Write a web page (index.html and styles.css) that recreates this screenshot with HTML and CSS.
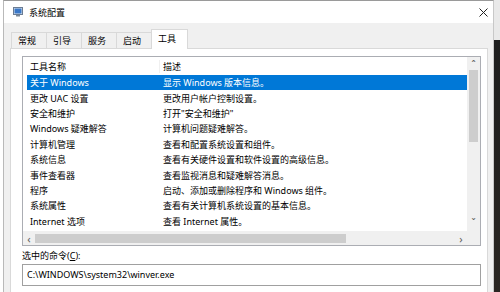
FILE: index.html
```html
<!DOCTYPE html>
<html lang="zh-CN">
<head>
    <meta charset="UTF-8">
    <title>系统配置</title>
    <link rel="stylesheet" href="styles.css">
</head>
<body>
    <div class="window">
        <div class="titlebar">
            <svg class="app-icon" width="10" height="10" viewBox="0 0 10 10">
                <rect x="0.5" y="0.5" width="9" height="7" fill="#dfe6ee" stroke="#6b7c93"/>
                <rect x="1.5" y="1.5" width="7" height="5" fill="#3a78c8"/>
                <rect x="3" y="8" width="4" height="1.5" fill="#7a8794"/>
            </svg>
            <span class="title">系统配置</span>
            <svg class="close" width="9" height="9" viewBox="0 0 9 9">
                <path d="M0.5 0.5 L8.5 8.5 M8.5 0.5 L0.5 8.5" stroke="#222" stroke-width="1"/>
            </svg>
        </div>

        <div class="client">
            <div class="tabs">
                <div class="tab">常规</div>
                <div class="tab">引导</div>
                <div class="tab">服务</div>
                <div class="tab">启动</div>
                <div class="tab active">工具</div>
            </div>

            <div class="panel">
                <div class="listview">
                    <div class="lv-main">
                        <div class="lv-list">
                            <div class="lv-header">
                                <div class="col-name">工具名称</div>
                                <div class="col-desc">描述</div>
                            </div>
                            <div class="lv-row selected">
                                <div class="col-name">关于 Windows</div>
                                <div class="col-desc">显示 Windows 版本信息。</div>
                            </div>
                            <div class="lv-row">
                                <div class="col-name">更改 UAC 设置</div>
                                <div class="col-desc">更改用户帐户控制设置。</div>
                            </div>
                            <div class="lv-row">
                                <div class="col-name">安全和维护</div>
                                <div class="col-desc">打开"安全和维护"</div>
                            </div>
                            <div class="lv-row">
                                <div class="col-name">Windows 疑难解答</div>
                                <div class="col-desc">计算机问题疑难解答。</div>
                            </div>
                            <div class="lv-row">
                                <div class="col-name">计算机管理</div>
                                <div class="col-desc">查看和配置系统设置和组件。</div>
                            </div>
                            <div class="lv-row">
                                <div class="col-name">系统信息</div>
                                <div class="col-desc">查看有关硬件设置和软件设置的高级信息。</div>
                            </div>
                            <div class="lv-row">
                                <div class="col-name">事件查看器</div>
                                <div class="col-desc">查看监视消息和疑难解答消息。</div>
                            </div>
                            <div class="lv-row">
                                <div class="col-name">程序</div>
                                <div class="col-desc">启动、添加或删除程序和 Windows 组件。</div>
                            </div>
                            <div class="lv-row">
                                <div class="col-name">系统属性</div>
                                <div class="col-desc">查看有关计算机系统设置的基本信息。</div>
                            </div>
                            <div class="lv-row">
                                <div class="col-name">Internet 选项</div>
                                <div class="col-desc">查看 Internet 属性。</div>
                            </div>
                        </div>
                        <div class="vscroll">
                            <span class="arrow">&#710;</span>
                            <div class="vthumb"></div>
                            <span class="arrow down">&#711;</span>
                        </div>
                    </div>
                    <div class="hscroll">
                        <span class="arrow">&lsaquo;</span>
                        <div class="htrack"><div class="hthumb"></div></div>
                        <span class="arrow">&rsaquo;</span>
                        <div class="corner"></div>
                    </div>
                </div>

                <div class="cmd-label">选中的命令(<u>C</u>):</div>
                <div class="cmd">C:\WINDOWS\system32\winver.exe</div>
                <div class="buttons"><div class="btn"></div></div>
            </div>
        </div>
    </div>
    <div class="desktop"></div>
</body>
</html>
```

FILE: styles.css
```css
body {
    margin: 0;
    width: 500px;
    height: 292px;
    overflow: hidden;
    display: flex;
    font-family: "Noto Sans", "Noto Sans CJK SC", sans-serif;
    font-size: 9px;
    color: #000;
    background: #fff;
}

.window {
    width: 489px;
    height: 292px;
    margin-left: 3px;
    border-left: 1px solid #b9b9b9;
    border-right: 1px solid #c8c8c8;
    border-top: 1px solid #9a9a9a;
    display: flex;
    flex-direction: column;
    flex-shrink: 0;
    overflow: hidden;
}

.desktop {
    flex: 1;
    background: linear-gradient(#e9e9e9 0, #e9e9e9 40px, #1e1e1e 40px, #2a2622 100%);
}

.titlebar {
    height: 22px;
    flex-shrink: 0;
    background: #fff;
    display: flex;
    align-items: center;
    padding-left: 9px;
    padding-right: 5px;
}

.app-icon {
    margin-right: 6px;
}

.title {
    flex: 1;
}

.client {
    flex: 1 0 auto;
    background: #f0f0f0;
    padding: 6px 5px 0 6px;
    display: flex;
    flex-direction: column;
}

.tabs {
    display: flex;
    flex-shrink: 0;
    height: 19px;
    align-items: flex-end;
    padding-left: 1px;
}

.tab {
    width: 35px;
    height: 16px;
    box-sizing: border-box;
    padding-left: 6px;
    line-height: 15px;
    border: 1px solid #d9d9d9;
    border-bottom: none;
    border-right: none;
    background: #f0f0f0;
}

.tab.active {
    width: 37px;
    height: 20px;
    margin-bottom: -1px;
    background: #fff;
    border-right: 1px solid #d9d9d9;
    padding-top: 1px;
    position: relative;
}

.panel {
    flex: 1 0 auto;
    background: #fff;
    border: 1px solid #d9d9d9;
    border-bottom: none;
    padding: 7px 6px 0 11px;
}

.listview {
    height: 188px;
    border: 1px solid #abadb3;
    display: flex;
    flex-direction: column;
}

.lv-main {
    flex: 1;
    display: flex;
    min-height: 0;
}

.lv-list {
    flex: 1;
    padding-left: 4px;
    overflow: hidden;
}

.lv-header {
    height: 18px;
    display: flex;
    align-items: center;
}

.lv-header .col-name {
    border-right: 1px solid #f0f0f0;
}

.lv-row {
    height: 15.4px;
    display: flex;
    align-items: center;
    white-space: nowrap;
}

.lv-row.selected {
    background: #0078d7;
    color: #fff;
}

.col-name {
    width: 133px;
    padding-left: 3px;
    flex-shrink: 0;
    box-sizing: border-box;
}

.col-desc {
    padding-left: 3px;
}

.vscroll {
    width: 13px;
    background: #f0f0f0;
    display: flex;
    flex-direction: column;
    align-items: center;
}

.arrow {
    color: #606060;
    font-size: 10px;
    line-height: 13px;
    height: 13px;
}

.vscroll .arrow {
    line-height: 16px;
}

.vscroll .arrow.down {
    line-height: 10px;
}

.vthumb {
    width: 9px;
    height: 72px;
    background: #cdcdcd;
}

.vscroll .down {
    margin-top: auto;
}

.hscroll {
    height: 14px;
    flex-shrink: 0;
    background: #f0f0f0;
    display: flex;
    align-items: center;
}

.hscroll .arrow {
    width: 12px;
    text-align: center;
    font-size: 11px;
}

.htrack {
    flex: 1;
    height: 9px;
}

.hthumb {
    width: 311px;
    height: 9px;
    background: #cdcdcd;
}

.corner {
    width: 13px;
    height: 14px;
    background: #f0f0f0;
}

.cmd-label {
    margin-top: 3px;
    height: 14px;
    line-height: 14px;
}

.cmd {
    margin-top: 1px;
    height: 22px;
    box-sizing: border-box;
    border: 1px solid #a0a0a0;
    padding-left: 4px;
    line-height: 20px;
}

.buttons {
    display: flex;
    justify-content: flex-end;
    margin-top: 7px;
}

.btn {
    width: 62px;
    height: 20px;
    border: 1px solid #adadad;
    background: #e1e1e1;
}
```
